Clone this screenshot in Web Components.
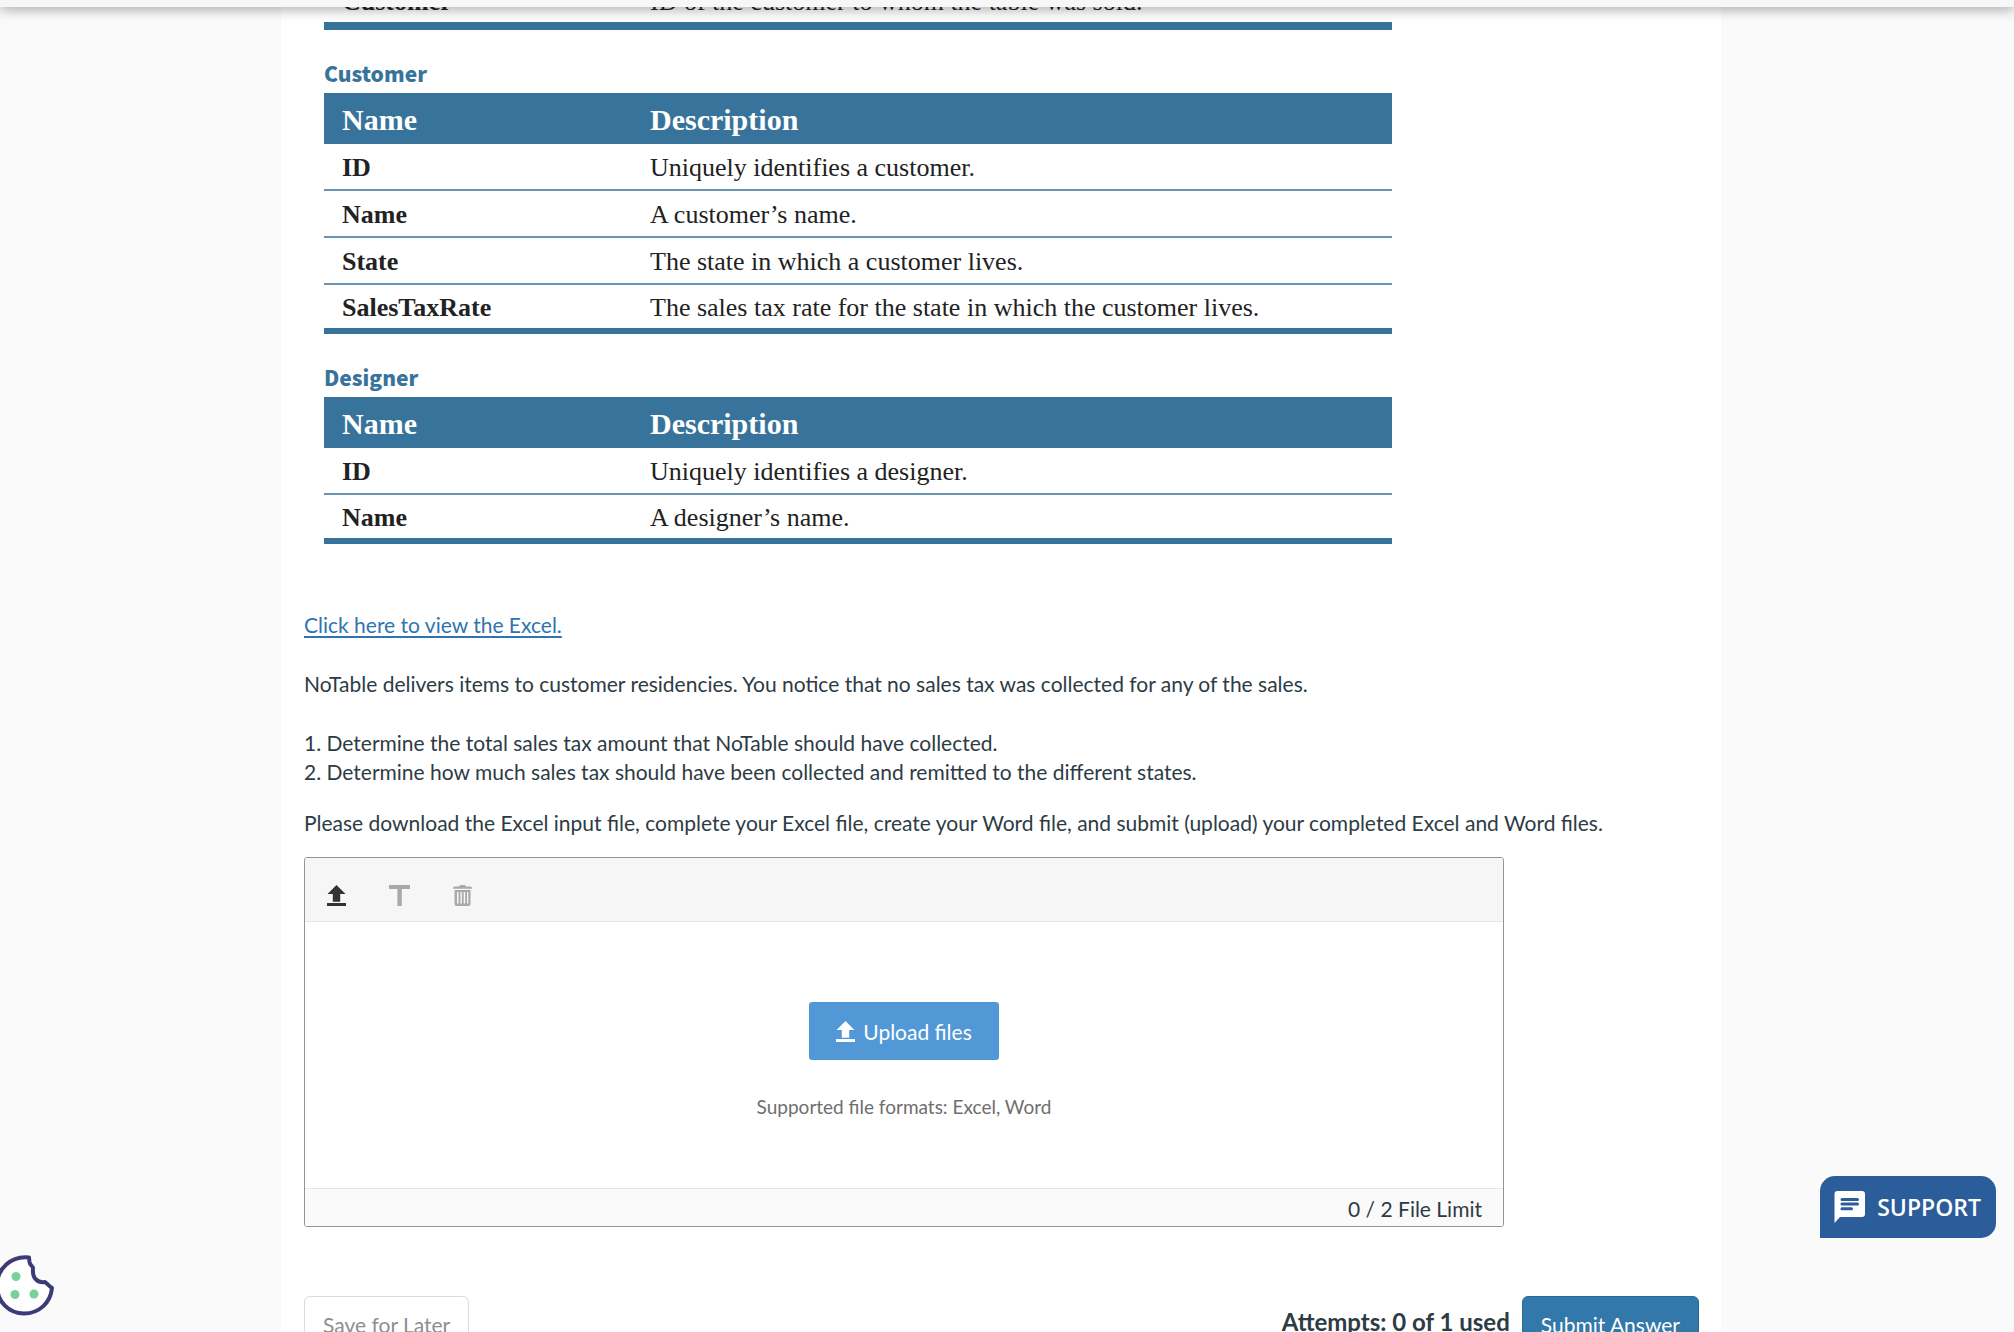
<!DOCTYPE html>
<html lang="en">
<head>
<meta charset="utf-8">
<meta name="viewport" content="width=device-width, initial-scale=1">
<title>Assignment question</title>
<style>
  body {
    margin: 0;
    font-family: Lato, "Liberation Sans", sans-serif;
    font-size: 21px;
    line-height: 29px;
    color: #2d3b45;
    background: #fafafa;
  }
</style>
</head>
<body>
<assignment-page>
  <entity-table entity="sale"></entity-table>
  <entity-table entity="customer"></entity-table>
  <entity-table entity="designer"></entity-table>
  <question-text></question-text>
  <file-upload limit="2" formats="Excel, Word"></file-upload>
  <submit-bar used="0" allowed="1"></submit-bar>
</assignment-page>
<support-button></support-button>
<cookie-button></cookie-button>

<script>
const entities = {
  sale: {
    rows: [["Customer", "ID of the customer to whom the table was sold."]],
  },
  customer: {
    title: "Customer",
    rows: [
      ["ID", "Uniquely identifies a customer."],
      ["Name", "A customer’s name."],
      ["State", "The state in which a customer lives."],
      ["SalesTaxRate", "The sales tax rate for the state in which the customer lives."],
    ],
  },
  designer: {
    title: "Designer",
    rows: [
      ["ID", "Uniquely identifies a designer."],
      ["Name", "A designer’s name."],
    ],
  },
};

const uploadIcon = `
  <svg width="19" height="21" viewBox="0 0 19 21" fill="currentColor" aria-hidden="true">
    <path d="M9.5 0L18.5 9H13.2V16.8H5.8V9H.5Z M0 18H19V21H0Z"/>
  </svg>`;

function makeTemplate(html) {
  const template = document.createElement("template");
  template.innerHTML = html;
  return template;
}

class BaseElement extends HTMLElement {
  constructor() {
    super();
    this.attachShadow({ mode: "open" });
    this.shadowRoot.appendChild(this.constructor.template.content.cloneNode(true));
  }
}

class AssignmentPage extends BaseElement {
  static template = makeTemplate(`
    <style>
      :host {
        display: block;
        height: 100vh;
        overflow: hidden;
        padding-right: 12px;
      }
      header {
        position: fixed;
        top: 0;
        left: 0;
        right: 0;
        z-index: 1;
        height: 7px;
        background: #f7f7f7;
        box-shadow: 0 0 14px rgba(0, 0, 0, 0.6);
      }
      /* the question is scrolled part of the way under the header */
      main {
        box-sizing: border-box;
        max-width: 1440px;
        min-height: 100vh;
        margin: -21px auto 0;
        padding: 0 22px 0 23px;
        background: #fff;
      }
    </style>
    <header></header>
    <main><slot></slot></main>
  `);
}

class EntityTable extends BaseElement {
  static template = makeTemplate(`
    <style>
      :host {
        display: block;
        max-width: 1068px;
        margin: 0 20px 30px;
        font-family: "Liberation Serif", serif;
        font-size: 26px;
        color: #222;
      }
      table {
        width: 100%;
        border-collapse: separate;
        border-spacing: 0;
        border-bottom: 6px solid #37739b;
      }
      :host([entity="sale"]) table { border-bottom-width: 8px; }
      caption {
        padding-bottom: 7px;
        font: 900 21px/26px "Noto Sans CJK SC", "Noto Sans", sans-serif;
        text-align: left;
        color: #37739b;
      }
      th, td {
        box-sizing: border-box;
        height: 47px;
        padding: 2px 18px 0;
        text-align: left;
        vertical-align: middle;
      }
      th:first-child { width: 308px; }
      thead th {
        height: 51px;
        font-size: 30px;
        color: #fff;
        background: #37739b;
      }
      tbody tr:not(:last-child) > * { border-bottom: 2px solid #6795b3; }
      tbody tr:last-child > * { height: 43px; }
    </style>
    <table>
      <caption></caption>
      <thead><tr><th scope="col">Name</th><th scope="col">Description</th></tr></thead>
      <tbody></tbody>
    </table>
  `);

  connectedCallback() {
    const entity = entities[this.getAttribute("entity")];
    const caption = this.shadowRoot.querySelector("caption");
    if (entity.title) {
      caption.textContent = entity.title;
    } else {
      caption.remove();
      this.shadowRoot.querySelector("thead").remove();
    }
    const body = this.shadowRoot.querySelector("tbody");
    for (const [name, description] of entity.rows) {
      const row = body.insertRow();
      const th = document.createElement("th");
      th.scope = "row";
      th.textContent = name;
      row.appendChild(th);
      row.insertCell().textContent = description;
    }
  }
}

class QuestionText extends BaseElement {
  static template = makeTemplate(`
    <style>
      :host {
        display: block;
        margin-top: 66px;
      }
      p { margin: 0 0 30px; }
      ol {
        margin: 0 0 22px;
        padding: 0;
        list-style: none;
      }
      p:last-child { margin-bottom: 20px; }
      a {
        color: #2f74b0;
        text-underline-offset: 3px;
        text-decoration-thickness: 2px;
      }
    </style>
    <p><a href="#excel">Click here to view the Excel.</a></p>
    <p>NoTable delivers items to customer residencies. You notice that no sales tax was collected for any of the sales.</p>
    <ol>
      <li>1. Determine the total sales tax amount that NoTable should have collected.</li>
      <li>2. Determine how much sales tax should have been collected and remitted to the different states.</li>
    </ol>
    <p>Please download the Excel input file, complete your Excel file, create your Word file, and submit (upload) your completed Excel and Word files.</p>
  `);
}

class FileUpload extends BaseElement {
  static template = makeTemplate(`
    <style>
      :host {
        display: block;
        box-sizing: border-box;
        max-width: 1200px;
        border: 1px solid #949494;
        border-radius: 3px;
        overflow: hidden;
      }
      button {
        font: inherit;
        cursor: pointer;
      }
      svg { display: block; }
      .toolbar {
        display: flex;
        gap: 21px;
        padding: 16px 10px 5px;
        background: #f6f6f6;
        border-bottom: 1px solid #e6e6e6;
      }
      .toolbar button {
        display: grid;
        place-items: center;
        width: 42px;
        height: 42px;
        padding: 0;
        border: 0;
        background: none;
        color: #333;
      }
      .toolbar button:disabled {
        color: #a9a9a9;
        cursor: default;
      }
      .drop {
        display: flex;
        flex-direction: column;
        align-items: center;
        gap: 32px;
        padding: 80px 0 67px;
        background: #fff;
      }
      .upload {
        display: flex;
        align-items: center;
        gap: 8px;
        height: 58px;
        padding: 0 27px;
        border: 0;
        border-radius: 3px;
        background: #5298d6;
        color: #fff;
      }
      .formats {
        font-size: 19px;
        color: #6e6e6e;
      }
      footer {
        padding: 5px 21px 3px;
        text-align: right;
        background: #fafafa;
        border-top: 1px solid #e6e6e6;
      }
    </style>
    <div class="toolbar">
      <button type="button" aria-label="Upload">${uploadIcon}</button>
      <button type="button" aria-label="Rename" disabled>
        <svg width="21" height="21" viewBox="0 0 21 21" fill="currentColor"><path d="M0 0H21V4H12.8V21H8.4V4H0Z"/></svg>
      </button>
      <button type="button" aria-label="Delete" disabled>
        <svg width="19" height="21" viewBox="0 0 19 21" fill="currentColor">
          <path d="M6 1.5Q6.300 0 7.500 0H11.500Q12.700 0 13 1.500H17.500Q19 1.500 19 3V3.800H0V3Q0 1.500 1.500 1.500Z"/>
          <path fill-rule="evenodd" d="M1.500 5H17.500V18.500Q17.500 21 15.300 21H3.700Q1.500 21 1.500 18.500Z M4 7V18.500H5.500V7Z M7.400 7V18.500H8.900V7Z M10.700 7V18.500H12.200V7Z M14 7V18.500H15.300V7Z"/>
        </svg>
      </button>
    </div>
    <div class="drop">
      <button class="upload" type="button">${uploadIcon}Upload files</button>
      <span class="formats"></span>
    </div>
    <footer></footer>
  `);

  connectedCallback() {
    this.shadowRoot.querySelector(".formats").textContent =
      `Supported file formats: ${this.getAttribute("formats")}`;
    this.shadowRoot.querySelector("footer").textContent =
      `0 / ${this.getAttribute("limit")} File Limit`;
  }
}

class SubmitBar extends BaseElement {
  static template = makeTemplate(`
    <style>
      :host {
        display: flex;
        align-items: flex-start;
        gap: 12px;
        margin-top: 69px;
      }
      button {
        height: 56px;
        padding: 0 18px;
        border: 1px solid #dcdcdc;
        border-radius: 6px;
        font: inherit;
        color: #8e8e8e;
        background: #fff;
        cursor: pointer;
      }
      .submit {
        border-color: #2b6a94;
        color: #fff;
        background: #3278aa;
      }
      .attempts {
        margin-left: auto;
        padding-top: 11px;
        font-size: 24px;
        font-weight: 700;
      }
    </style>
    <button type="button">Save for Later</button>
    <span class="attempts"></span>
    <button class="submit" type="submit">Submit Answer</button>
  `);

  connectedCallback() {
    this.shadowRoot.querySelector(".attempts").textContent =
      `Attempts: ${this.getAttribute("used")} of ${this.getAttribute("allowed")} used`;
  }
}

class SupportButton extends BaseElement {
  static template = makeTemplate(`
    <style>
      :host {
        position: fixed;
        right: 18px;
        bottom: 94px;
      }
      button {
        display: flex;
        align-items: center;
        gap: 12px;
        height: 62px;
        padding: 0 15px 0 14px;
        border: 0;
        border-radius: 15px 15px 15px 0;
        font: 600 23px/30px "Open Sans", "Noto Sans", sans-serif;
        color: #fff;
        background: #2c5d9b;
        cursor: pointer;
      }
    </style>
    <button type="button">
      <svg width="31" height="32" viewBox="0 0 31 32" aria-hidden="true">
        <path fill="#fff" d="M3.500 0H28Q31 0 31 3V23Q31 26 28 26H6L.5 32V3Q.5 0 3.500 0Z"/>
        <path stroke="#2c5d9b" stroke-width="3" stroke-linecap="round" d="M8 8.500H23.500M8 13H23.500M8 17.700H17.500"/>
      </svg>
      SUPPORT
    </button>
  `);
}

class CookieButton extends BaseElement {
  static template = makeTemplate(`
    <style>
      :host {
        position: fixed;
        left: -6px;
        bottom: 16px;
      }
      button {
        display: block;
        padding: 0;
        border: 0;
        background: none;
        cursor: pointer;
      }
      svg { display: block; }
    </style>
    <button type="button" aria-label="Cookie settings">
      <svg width="62" height="62" viewBox="0 0 62 62">
        <path fill="#fff" stroke="#3d3a78" stroke-width="4" stroke-linejoin="round"
          d="M35 3.500C17 1.500 3 15 3 31.500C3 48 15 59.500 30 59.500C45 59.500 56.500 49 58 34C55 32 53.500 30 51 28C44 29 38 25 39 14C38.500 11.500 36 11.500 35.500 8Z"/>
        <g fill="#76d19b">
          <circle cx="22" cy="22.500" r="4.500"/>
          <circle cx="21" cy="40.500" r="4.500"/>
          <circle cx="40" cy="40" r="4.500"/>
        </g>
      </svg>
    </button>
  `);
}

customElements.define("assignment-page", AssignmentPage);
customElements.define("entity-table", EntityTable);
customElements.define("question-text", QuestionText);
customElements.define("file-upload", FileUpload);
customElements.define("submit-bar", SubmitBar);
customElements.define("support-button", SupportButton);
customElements.define("cookie-button", CookieButton);
</script>
</body>
</html>
